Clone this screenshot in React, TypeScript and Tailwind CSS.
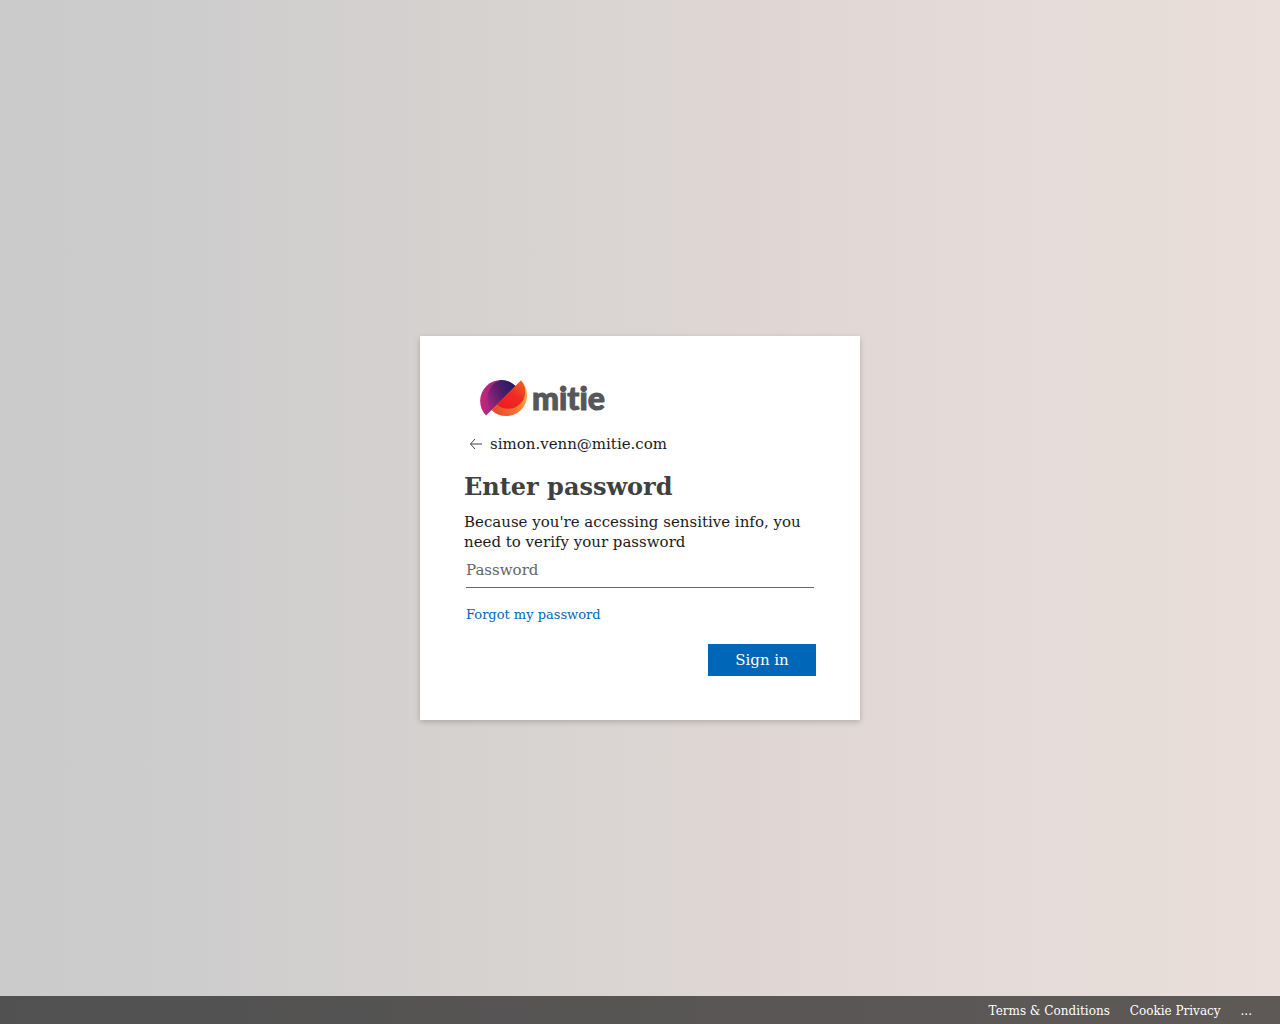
import React, { useState } from 'react';

const footerLinks = ['Terms & Conditions', 'Cookie Privacy', '...'];

const MitieLogo: React.FC = () => (
    <div className="flex h-9 items-center gap-1 pl-4" role="img" aria-label="mitie">
        <svg width="48" height="38" viewBox="0 0 48 38" aria-hidden="true">
            <defs>
                <linearGradient id="pink" x1="0" y1="0" x2="1" y2="0">
                    <stop offset="0" stopColor="#c8267f" />
                    <stop offset="1" stopColor="#5c2a6c" />
                </linearGradient>
                <linearGradient id="purple" x1="0" y1="0.6" x2="1" y2="0.1">
                    <stop offset="0" stopColor="#98237a" />
                    <stop offset="0.5" stopColor="#4a1d68" />
                    <stop offset="1" stopColor="#1d1a60" />
                </linearGradient>
                <linearGradient id="orange" x1="0" y1="0.8" x2="1" y2="0.3">
                    <stop offset="0" stopColor="#e8452a" />
                    <stop offset="0.6" stopColor="#f77a33" />
                    <stop offset="1" stopColor="#ffb54a" />
                </linearGradient>
                <linearGradient id="red" x1="0.2" y1="1" x2="0.9" y2="0">
                    <stop offset="0" stopColor="#f01a22" />
                    <stop offset="0.5" stopColor="#f02a23" />
                    <stop offset="1" stopColor="#f0622a" />
                </linearGradient>
            </defs>
            <path d="M6 36.5A20.5 20.5 0 0 1 36 7.5Z" fill="url(#pink)" />
            <path d="M11.5 31A19 19 0 0 1 20.5 1A20.5 20.5 0 0 1 36 7.5Z" fill="url(#purple)" />
            <path d="M11.5 31L41 1.5A20.5 20.5 0 0 1 11.5 31Z" fill="url(#orange)" />
            <path d="M17 25.5L41 1.5A17 17 0 0 1 17 25.5Z" fill="url(#red)" />
        </svg>
        <span className="font-[Lato,sans-serif] text-[32px] font-black leading-9 text-[#565759] [font-variant-ligatures:none] [-webkit-text-stroke:1px_#565759]">
            mitie
        </span>
    </div>
);

const App: React.FC = () => {
    const [password, setPassword] = useState('');

    return (
        <div className="flex min-h-screen flex-col bg-[linear-gradient(90deg,#cbcbcb_0%,#cecdcd_15%,#dbd6d3_52%,#dfd6d4_56%,#eadfda_100%)] font-['DejaVu_Serif',serif] text-[15px] leading-5 text-[#1b1b1b]">
            <main className="flex flex-1 flex-col items-center justify-center pt-15">
                <form
                    className="w-full max-w-[440px] bg-white p-11 shadow-[0_2px_6px_rgba(0,0,0,0.2)]"
                    onSubmit={(e) => e.preventDefault()}
                >
                    <MitieLogo />
                    <div className="mt-4 flex h-6 items-center gap-1.5">
                        <button type="button" aria-label="Back" className="pl-1">
                            <svg width="16" height="24" viewBox="0 0 16 24" fill="none" stroke="#404040" aria-hidden="true">
                                <path d="M2.5 12H14M7 7L2.5 12L7 17" />
                            </svg>
                        </button>
                        <span>simon.venn@mitie.com</span>
                    </div>
                    <h1 className="mt-4 text-2xl leading-[30px] font-bold text-[#404040]">Enter password</h1>
                    <p id="reason" className="mt-2.5">
                        Because you're accessing sensitive info, you need to verify your password
                    </p>
                    <div className="px-0.5">
                        <input
                            type="password"
                            placeholder="Password"
                            aria-label="Password"
                            aria-describedby="reason"
                            value={password}
                            onChange={(e) => setPassword(e.target.value)}
                            className="h-9 w-full border-b border-[#666] outline-none placeholder:text-[#666]"
                        />
                        <a href="#" className="mt-4 block pt-px text-[13px] text-[#0067b8]">Forgot my password</a>
                    </div>
                    <div className="mt-[19px] flex justify-end">
                        <button type="submit" className="h-8 w-27 bg-[#0067b8] text-white">Sign in</button>
                    </div>
                </form>
            </main>
            <footer className="flex h-7 items-center justify-end gap-5 bg-black/60 pt-0.5 pr-7 text-xs text-white">
                {footerLinks.map((label) => (
                    <a key={label} href="#">{label}</a>
                ))}
            </footer>
        </div>
    );
};

export default App;
